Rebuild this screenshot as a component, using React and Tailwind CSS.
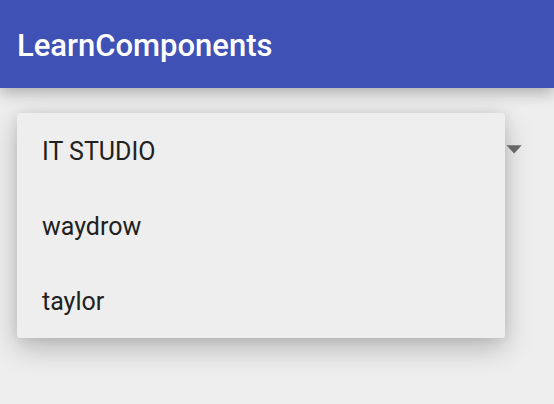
const options = ["IT STUDIO", "waydrow", "taylor"];

export default function App() {
  return (
    <div className="min-h-screen bg-[#eeeeee] font-['Roboto',sans-serif] text-[#212121]">
      <header className="flex h-22 items-center bg-[#3f51b5] px-[17px] pt-1 shadow-[0_5px_14px_rgba(0,0,0,0.27)]">
        <h1 className="text-[31px] leading-10 font-medium text-white">LearnComponents</h1>
      </header>
      <main className="flex items-start pt-[25px] pr-8 pl-[17px]">
        <ul
          role="listbox"
          aria-label="Team"
          className="flex-1 rounded-[3px] bg-[#eeeeee] shadow-[0_10px_28px_rgba(0,0,0,0.24),0_0_12px_rgba(0,0,0,0.08)]"
        >
          {options.map((option) => (
            <li key={option} role="option" aria-selected={option === "IT STUDIO"}>
              <button type="button" className="flex h-[75px] w-full items-center px-[25px] pt-0.5 text-left text-[25px] leading-8">
                {option}
              </button>
            </li>
          ))}
        </ul>
        <button type="button" aria-label="Toggle list" className="flex h-[75px] w-[17px] items-center justify-end pb-[3px]">
          <svg width="16" height="10" viewBox="0 0 16 10" fill="#666666">
            <path d="M0.5 1.3h15.2L8.1 9.6z" />
          </svg>
        </button>
      </main>
    </div>
  );
}
